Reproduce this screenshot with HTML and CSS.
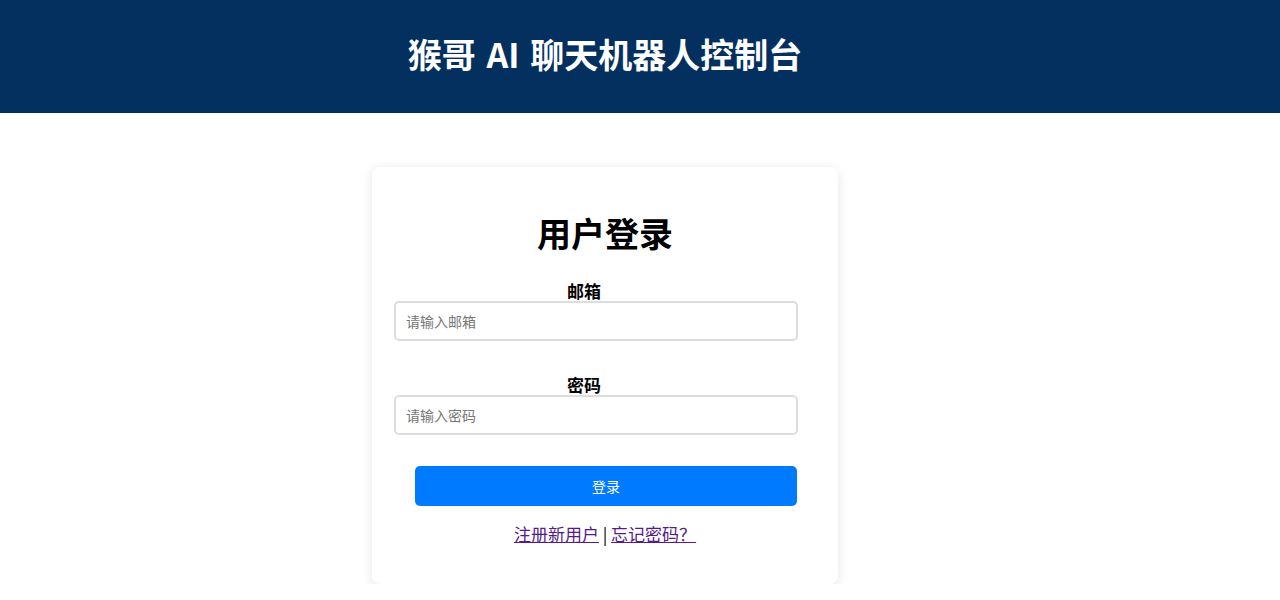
FILE: index.html
```html
<!DOCTYPE html>
<html lang="zh-CN">
<head>
    <meta charset="UTF-8">
    <meta name="viewport" content="width=device-width, initial-scale=1.0">
    <title>猴哥 AI 聊天机器人控制台</title>
    <link rel="stylesheet" href="styles.css">
</head>
<body>
    <header class="header">
        <h1>猴哥 AI 聊天机器人控制台</h1>
    </header>

    <main class="main">
        <div class="login-box">
            <h2>用户登录</h2>
            <form class="login-form" onsubmit="return false;">
                <div class="form-group">
                    <label for="email">邮箱</label>
                    <input type="text" id="email" placeholder="请输入邮箱">
                </div>
                <div class="form-group">
                    <label for="password">密码</label>
                    <input type="password" id="password" placeholder="请输入密码">
                </div>
                <button type="submit" class="btn-login">登录</button>
            </form>
            <p class="links">
                <a href="#register">注册新用户</a> | <a href="#forgot">忘记密码？</a>
            </p>
        </div>
    </main>
</body>
</html>
```

FILE: styles.css
```css
body {
    margin: 0;
    background-color: #fff;
    font-family: "Noto Sans CJK SC", "Liberation Sans", sans-serif;
    color: #000;
}

.header {
    background-color: #03305f;
    height: 113px;
    display: flex;
    align-items: center;
}

.header h1 {
    width: 1210px;
    margin: 0 0 6px;
    text-align: center;
    color: #fff;
    font-size: 34px;
    font-weight: bold;
    line-height: 1;
    word-spacing: 3px;
}

.main {
    width: 1210px;
    padding-top: 54px;
}

.login-box {
    width: 466px;
    margin: 0 auto;
    box-sizing: border-box;
    padding: 44px 40px 38px 22px;
    background: #fff;
    border-radius: 8px;
    box-shadow: 0 2px 12px rgba(0, 0, 0, 0.1);
}

.login-box h2 {
    margin: 0 0 26px 18px;
    text-align: center;
    font-size: 34px;
    font-weight: bold;
    line-height: 44px;
}

.form-group {
    margin-bottom: 34px;
}

.form-group + .form-group {
    margin-bottom: 31px;
}

.form-group label {
    display: block;
    text-align: center;
    padding-right: 24px;
    font-size: 17px;
    font-weight: bold;
    line-height: 20px;
}

.form-group input {
    display: block;
    width: 100%;
    height: 40px;
    box-sizing: border-box;
    padding: 0 10px;
    border: 2px solid #ddd;
    border-radius: 5px;
    font-family: inherit;
    font-size: 14px;
}

.form-group input::placeholder {
    color: #777;
}

.btn-login {
    display: block;
    width: 382px;
    height: 40px;
    margin: 0 0 0 21px;
    background: #007bff;
    color: #fff;
    border: none;
    border-radius: 5px;
    font-family: inherit;
    font-size: 14px;
    cursor: pointer;
}

.links {
    margin: 15px 0 0 18px;
    text-align: center;
    font-size: 17px;
}

.links a {
    color: #551a8b;
}
```
